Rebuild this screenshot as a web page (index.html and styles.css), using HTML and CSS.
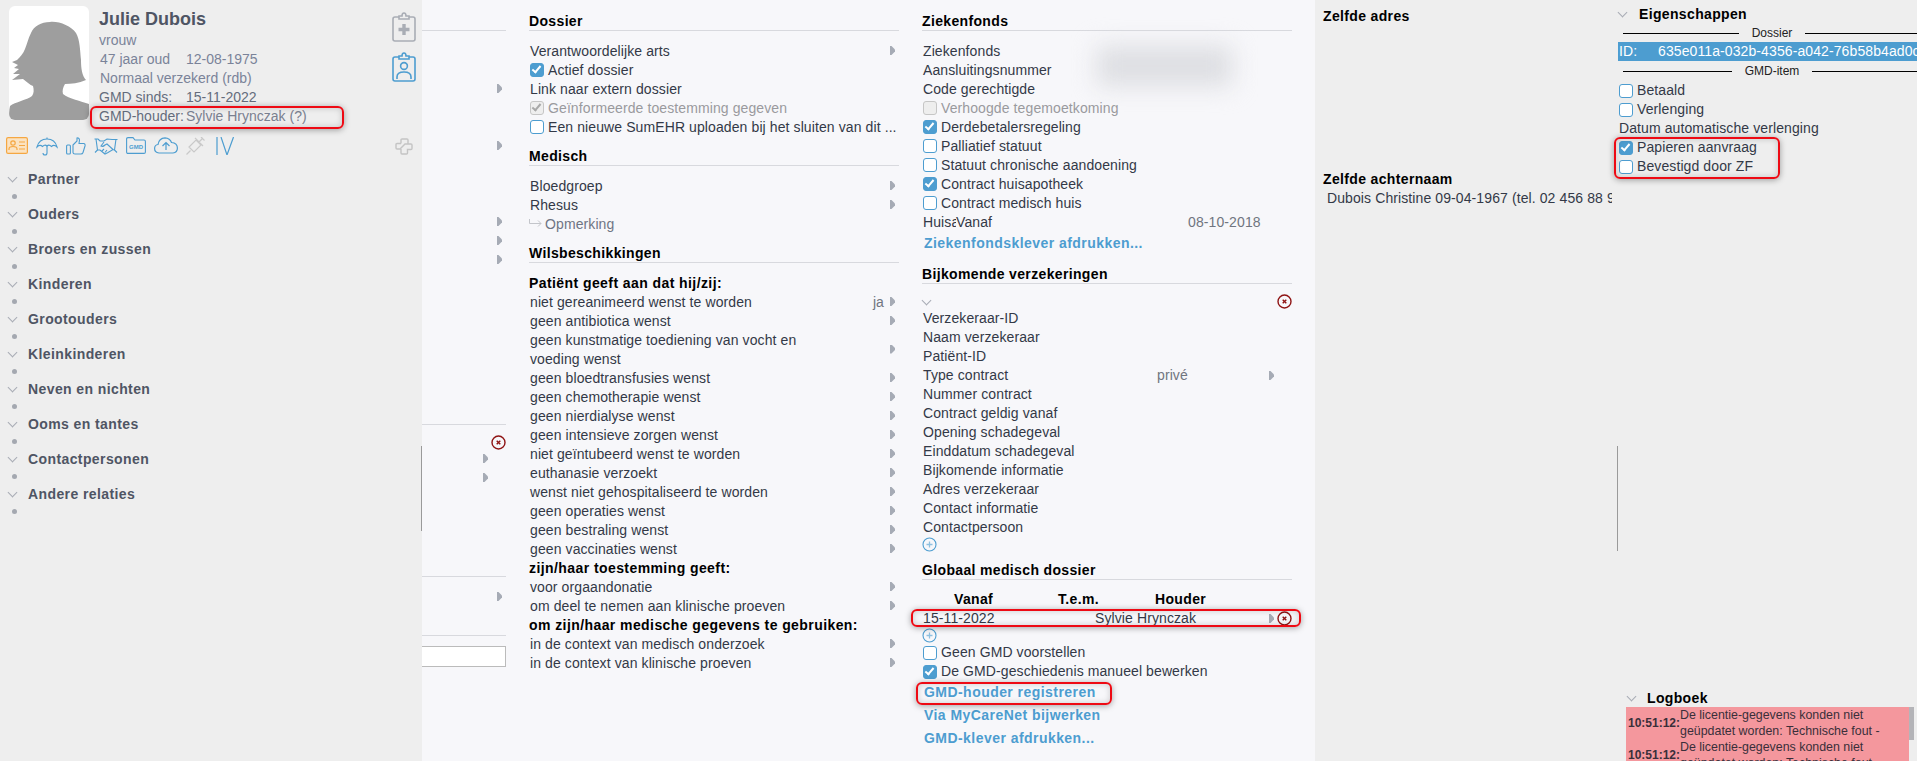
FILE: index.html
```html
<!DOCTYPE html>
<html lang="nl">
  <head>
    <meta charset="UTF-8" />
    <title>Julie Dubois</title>
    <link rel="stylesheet" href="styles.css">
  </head>
  <body>
    <!-- PATIENT -->
    <div id="sidebar">
      <div class="patientHead">
        <div class="photo">
          <svg width="80" height="114" viewBox="0 0 80 114">
            <path fill="#9e9e9e" d="M41 16C32 16 25 20 22 27C19 33 18 38 16 43C14 48 11 51 8 54L3 56L9 59L5 62L10 63L4 68L11 68L3 74L14 73C18 76 21 79 24 80C25 84 25 87 23 90C18 94 6 96 1 100C0 104 0 109 0 114L80 114L80 98C72 95 60 93 54 88C53 85 54 81 56 78C62 78 70 77 77 74C73 70 72 62 72 54C71 44 71 34 67 27C62 20 50 15 41 16Z"/>
          </svg>
        </div>
        <div class="patientInfo">
          <div class="patientName">Julie Dubois</div>
          <div class="infoLine">vrouw</div>
          <div class="infoLine"><span class="infoKey inset">47 jaar oud</span><span>12-08-1975</span></div>
          <div class="infoLine"><span class="inset">Normaal verzekerd (rdb)</span></div>
          <div class="infoLine dark"><span class="infoKey">GMD sinds:</span><span>15-11-2022</span></div>
          <div class="infoLine dark"><span class="infoKey">GMD-houder:</span><span class="soft">Sylvie Hrynczak (?)</span></div>
        </div>
        <div class="clipIcons">
          <svg width="24" height="30" viewBox="0 0 24 30" fill="none" stroke="#a9adb5" stroke-width="1.6">
            <path d="M7 5H3Q1 5 1 7V27Q1 29 3 29H21Q23 29 23 27V7Q23 5 21 5H17"/>
            <path d="M7 7V4H10Q10 1 12 1Q14 1 14 4H17V7Z"/>
            <path d="M12 12V23M6.5 17.5H17.5" stroke-width="3.4"/>
          </svg>
          <svg width="24" height="30" viewBox="0 0 24 30" fill="none" stroke="#4d9dd0" stroke-width="1.6">
            <path d="M7 5H3Q1 5 1 7V27Q1 29 3 29H21Q23 29 23 27V7Q23 5 21 5H17"/>
            <path d="M7 7V4H10Q10 1 12 1Q14 1 14 4H17V7Z"/>
            <circle cx="12" cy="14" r="3.4"/>
            <path d="M5 27V25Q5 20 12 20Q19 20 19 25V27"/>
          </svg>
        </div>
      </div>

      <div class="iconBar">
        <svg width="22" height="17" viewBox="0 0 22 17" fill="none" stroke="#f5a742" stroke-width="1.2">
          <rect x="0.6" y="0.6" width="20.8" height="15.8" rx="1.5" fill="#fbe3c2"/>
          <circle cx="7" cy="6" r="2.2"/>
          <path d="M3 13V12Q3 9.5 7 9.5Q11 9.5 11 12V13M13 5H19M13 8.5H19M13 12H19"/>
        </svg>
        <svg width="22" height="19" viewBox="0 0 22 19" fill="none" stroke="#4d9dd0" stroke-width="1.1">
          <path d="M1 10Q3 2 11 2Q19 2 21 10Q18 7 15.5 9.5Q13 7 11 9Q9 7 6.5 9.5Q4 7 1 10Z"/>
          <path d="M11 0.5V2M11 9V16Q11 18 9 18Q7 18 7 16"/>
        </svg>
        <svg width="20" height="18" viewBox="0 0 20 18" fill="none" stroke="#4d9dd0" stroke-width="1.1">
          <rect x="0.6" y="8" width="3.8" height="9" rx="1"/>
          <path d="M7 8L11 4V1Q13 0.5 13.5 3L13 6.5H18Q19.5 7 19 9L17 15.5Q16.5 17 15 17H9Q7 17 7 15.5Z"/>
        </svg>
        <svg width="24" height="18" viewBox="0 0 24 18" fill="none" stroke="#4d9dd0" stroke-width="1.1">
          <path d="M0.5 2H4L6 4H10L13 2L18 2.5H23.5M2 2L3.5 13L1 15.5M22 2L20.5 13L23 15.5"/>
          <path d="M3.5 13H6L11 17L14 15.5L19 12.5L20.5 13M10 5L7 9Q9 10 11 8L13 7L19 12.5M8 14L10 12M11 15.5L13 13"/>
        </svg>
        <svg width="20" height="17" viewBox="0 0 20 17" fill="none" stroke="#4d9dd0" stroke-width="1.1">
          <path d="M0.6 2Q0.6 0.6 2 0.6H7L9 3H18Q19.4 3 19.4 4.4V15Q19.4 16.4 18 16.4H2Q0.6 16.4 0.6 15Z"/>
          <text x="10" y="12" class="gmdGlyph">GMD</text>
        </svg>
        <svg width="24" height="17" viewBox="0 0 24 17" fill="none" stroke="#4d9dd0" stroke-width="1.2">
          <path d="M6 16H5Q0.6 15.5 0.6 11.5Q0.6 8 4 7.5Q5 1 11 0.8Q16 1 17.5 5.5Q23.4 6 23.4 11Q23.4 15.5 19 16Z"/>
          <path d="M12 13V5.5M8.5 9L12 5.5L15.5 9"/>
        </svg>
        <svg width="19" height="18" viewBox="0 0 19 18" fill="none" stroke="#c9c9c9" stroke-width="1.2">
          <path d="M0.5 17.5L4.5 13.5M3 10L8 15L15 8L10 3L3 10ZM9 1L17 9M13 5L17 1M15 0L18.5 3.5"/>
        </svg>
        <svg class="ivIcon" width="18" height="18" viewBox="0 0 18 18" fill="none" stroke="#4d9dd0" stroke-width="1.2">
          <path d="M1 0V18M5 0L11 18L17.5 0"/>
        </svg>
        <svg class="crossIcon" width="18" height="17" viewBox="0 0 18 17" fill="none" stroke="#c4c4c4" stroke-width="1.4">
          <path d="M6 5.5V2Q6 1 7 1H12Q13 1 13 2V5.5M6 5.5H2Q1 5.5 1 6.5V10Q1 11 2 11H5L10 6H16Q17 6 17 7V10.5Q17 11.5 16 11.5H12.5V15Q12.5 16 11.5 16H7Q6 16 6 15V11"/>
        </svg>
      </div>

      <div class="tree">
        <div class="treeItem"><div class="treeTitle"><span class="chev"></span>Partner</div><div class="treeDot"></div></div>
        <div class="treeItem"><div class="treeTitle"><span class="chev"></span>Ouders</div><div class="treeDot"></div></div>
        <div class="treeItem"><div class="treeTitle"><span class="chev"></span>Broers en zussen</div><div class="treeDot"></div></div>
        <div class="treeItem"><div class="treeTitle"><span class="chev"></span>Kinderen</div><div class="treeDot"></div></div>
        <div class="treeItem"><div class="treeTitle"><span class="chev"></span>Grootouders</div><div class="treeDot"></div></div>
        <div class="treeItem"><div class="treeTitle"><span class="chev"></span>Kleinkinderen</div><div class="treeDot"></div></div>
        <div class="treeItem"><div class="treeTitle"><span class="chev"></span>Neven en nichten</div><div class="treeDot"></div></div>
        <div class="treeItem"><div class="treeTitle"><span class="chev"></span>Ooms en tantes</div><div class="treeDot"></div></div>
        <div class="treeItem"><div class="treeTitle"><span class="chev"></span>Contactpersonen</div><div class="treeDot"></div></div>
        <div class="treeItem"><div class="treeTitle"><span class="chev"></span>Andere relaties</div><div class="treeDot"></div></div>
      </div>
    </div>

    <!-- MIDDEN -->
    <div id="middle">
      <div class="stubCol">
        <div class="stubRule"></div>
        <div class="stubArrow a1"></div>
        <div class="stubArrow a2"></div>
        <div class="stubArrow a3"></div>
        <div class="stubArrow a4"></div>
        <div class="stubArrow a5"></div>
        <div class="stubRule r2"></div>
        <svg class="removeIcon stubRemove" width="15" height="15" viewBox="0 0 15 15"><use href="#removeGlyph"/></svg>
        <div class="stubArrow a6"></div>
        <div class="stubArrow a7"></div>
        <div class="stubRule r3"></div>
        <div class="stubArrow a8"></div>
        <div class="stubRule r4"></div>
        <div class="stubInput"></div>
      </div>

      <div class="formCol nudged">
        <div class="secHead first">Dossier</div>
        <div class="row"><span class="lbl">Verantwoordelijke arts</span><i class="arrow"></i></div>
        <div class="row"><span class="cb on"></span>Actief dossier</div>
        <div class="row"><span class="lbl">Link naar extern dossier</span></div>
        <div class="row muted"><span class="cb dis on"></span>Geïnformeerde toestemming gegeven</div>
        <div class="row"><span class="cb"></span>Een nieuwe SumEHR uploaden bij het sluiten van dit ...</div>

        <div class="secHead">Medisch</div>
        <div class="row"><span class="lbl">Bloedgroep</span><i class="arrow"></i></div>
        <div class="row"><span class="lbl">Rhesus</span><i class="arrow"></i></div>
        <div class="row soft">
          <svg class="replyIcon" width="13" height="9" viewBox="0 0 13 9" fill="none" stroke="#c3c5ca" stroke-width="1"><path d="M0.5 0V4.5H12M9 1.5L12 4.5L9 7.5"/></svg>Opmerking
        </div>

        <div class="secHead">Wilsbeschikkingen</div>
        <div class="row bold">Patiënt geeft aan dat hij/zij:</div>
        <div class="row"><span class="lbl">niet gereanimeerd wenst te worden</span><span class="val">ja</span><i class="arrow"></i></div>
        <div class="row"><span class="lbl">geen antibiotica wenst</span><i class="arrow"></i></div>
        <div class="row double"><span class="lbl">geen kunstmatige toediening van vocht en voeding wenst</span><i class="arrow"></i></div>
        <div class="row"><span class="lbl">geen bloedtransfusies wenst</span><i class="arrow"></i></div>
        <div class="row"><span class="lbl">geen chemotherapie wenst</span><i class="arrow"></i></div>
        <div class="row"><span class="lbl">geen nierdialyse wenst</span><i class="arrow"></i></div>
        <div class="row"><span class="lbl">geen intensieve zorgen wenst</span><i class="arrow"></i></div>
        <div class="row"><span class="lbl">niet geïntubeerd wenst te worden</span><i class="arrow"></i></div>
        <div class="row"><span class="lbl">euthanasie verzoekt</span><i class="arrow"></i></div>
        <div class="row"><span class="lbl">wenst niet gehospitaliseerd te worden</span><i class="arrow"></i></div>
        <div class="row"><span class="lbl">geen operaties wenst</span><i class="arrow"></i></div>
        <div class="row"><span class="lbl">geen bestraling wenst</span><i class="arrow"></i></div>
        <div class="row"><span class="lbl">geen vaccinaties wenst</span><i class="arrow"></i></div>
        <div class="row bold">zijn/haar toestemming geeft:</div>
        <div class="row"><span class="lbl">voor orgaandonatie</span><i class="arrow"></i></div>
        <div class="row"><span class="lbl">om deel te nemen aan klinische proeven</span><i class="arrow"></i></div>
        <div class="row bold">om zijn/haar medische gegevens te gebruiken:</div>
        <div class="row"><span class="lbl">in de context van medisch onderzoek</span><i class="arrow"></i></div>
        <div class="row"><span class="lbl">in de context van klinische proeven</span><i class="arrow"></i></div>
      </div>

      <div class="formCol">
        <div class="blurBlob"></div>
        <div class="secHead first">Ziekenfonds</div>
        <div class="nudged">
          <div class="row"><span class="lbl">Ziekenfonds</span></div>
          <div class="row"><span class="lbl">Aansluitingsnummer</span></div>
          <div class="row"><span class="lbl">Code gerechtigde</span></div>
          <div class="row muted"><span class="cb dis"></span>Verhoogde tegemoetkoming</div>
          <div class="row"><span class="cb on"></span>Derdebetalersregeling</div>
          <div class="row"><span class="cb"></span>Palliatief statuut</div>
          <div class="row"><span class="cb"></span>Statuut chronische aandoening</div>
          <div class="row"><span class="cb on"></span>Contract huisapotheek</div>
          <div class="row"><span class="cb"></span>Contract medisch huis</div>
          <div class="row"><span class="lbl clipLbl">Huisapotheek</span><span class="clipVan">Vanaf</span><span class="val dateVal">08-10-2018</span></div>
          <div class="linkRow">Ziekenfondsklever afdrukken...</div>
        </div>

        <div class="secHead">Bijkomende verzekeringen</div>
        <div class="chevRow"><span class="chev"></span><svg class="removeIcon" width="15" height="15" viewBox="0 0 15 15"><use href="#removeGlyph"/></svg></div>
        <div class="row"><span class="lbl">Verzekeraar-ID</span></div>
        <div class="row"><span class="lbl">Naam verzekeraar</span></div>
        <div class="row"><span class="lbl">Patiënt-ID</span></div>
        <div class="row"><span class="lbl typeLbl">Type contract</span><span class="val">privé</span><i class="arrow typeArrow"></i></div>
        <div class="row"><span class="lbl">Nummer contract</span></div>
        <div class="row"><span class="lbl">Contract geldig vanaf</span></div>
        <div class="row"><span class="lbl">Opening schadegeval</span></div>
        <div class="row"><span class="lbl">Einddatum schadegeval</span></div>
        <div class="row"><span class="lbl">Bijkomende informatie</span></div>
        <div class="row"><span class="lbl">Adres verzekeraar</span></div>
        <div class="row"><span class="lbl">Contact informatie</span></div>
        <div class="row"><span class="lbl">Contactpersoon</span></div>
        <div class="plusRow short"><svg width="15" height="15" viewBox="0 0 15 15"><use href="#plusGlyph"/></svg></div>

        <div class="secHead">Globaal medisch dossier</div>
        <div class="gmdHead"><span class="cVan">Vanaf</span><span class="cTem">T.e.m.</span><span>Houder</span></div>
        <div class="gmdRow"><span class="cDate">15-11-2022</span><span>Sylvie Hrynczak</span><i class="arrow gmdArrow"></i><svg class="removeIcon" width="15" height="15" viewBox="0 0 15 15"><use href="#removeGlyph"/></svg></div>
        <div class="plusRow"><svg width="15" height="15" viewBox="0 0 15 15"><use href="#plusGlyph"/></svg></div>
        <div class="row"><span class="cb"></span>Geen GMD voorstellen</div>
        <div class="row"><span class="cb on"></span>De GMD-geschiedenis manueel bewerken</div>
        <div class="linkRow">GMD-houder registreren</div>
        <div class="linkRow">Via MyCareNet bijwerken</div>
        <div class="linkRow">GMD-klever afdrukken...</div>
      </div>
    </div>

    <!-- RECHTS -->
    <div id="right">
      <div class="relatedCol">
        <div class="relTitle">Zelfde adres</div>
        <div class="relTitle second">Zelfde achternaam</div>
        <div class="relLine">Dubois Christine 09-04-1967 (tel. 02 456 88 99)</div>
      </div>

      <div class="propsCol">
        <div class="propsTitle"><span class="chev"></span>Eigenschappen</div>
        <div class="legend"><span class="legendLine"></span><span class="legendText">Dossier</span><span class="legendLine"></span></div>
        <div class="idBar"><span class="idKey">ID:</span><span>635e011a-032b-4356-a042-76b58b4ad0c1</span></div>
        <div class="legend second"><span class="legendLine"></span><span class="legendText">GMD-item</span><span class="legendLine"></span></div>
        <div class="row"><span class="cb"></span>Betaald</div>
        <div class="row"><span class="cb"></span>Verlenging</div>
        <div class="row"><span class="lbl">Datum automatische verlenging</span></div>
        <div class="row"><span class="cb on"></span>Papieren aanvraag</div>
        <div class="row"><span class="cb"></span>Bevestigd door ZF</div>

        <div class="logBlock">
          <div class="logTitle"><span class="chev"></span>Logboek</div>
          <div class="logBox">
            <div class="logList">
              <div class="logItem"><b>10:51:12:</b><span>De licentie-gegevens konden niet geüpdatet worden: Technische fout -</span></div>
              <div class="logItem"><b>10:51:12:</b><span>De licentie-gegevens konden niet geüpdatet worden: Technische fout -</span></div>
            </div>
            <div class="logScroll"><div class="logThumb"></div></div>
          </div>
        </div>
      </div>
    </div>

    <!-- schuifbalk-randen en rode kaders over de schermafdruk -->
    <div class="edgeLine e1"></div>
    <div class="edgeLine e2"></div>
    <div class="mark m1"></div>
    <div class="mark m2"></div>
    <div class="mark m3"></div>
    <div class="mark m4"></div>

    <svg class="defs" width="0" height="0">
      <defs>
        <g id="removeGlyph" fill="none" stroke="#8f1414">
          <circle cx="7.5" cy="7.5" r="6.5" stroke-width="1.4"/>
          <path d="M5.7 5.7L9.3 9.3M9.3 5.7L5.7 9.3" stroke-width="1.4"/>
        </g>
        <g id="plusGlyph" fill="none" stroke="#4d9dd0">
          <circle cx="7.5" cy="7.5" r="6.5" stroke-width="1.1"/>
          <path d="M7.5 4.5V10.5M4.5 7.5H10.5" stroke-width="1.3" stroke="#8fc0df"/>
        </g>
      </defs>
    </svg>
  </body>
</html>
```

FILE: styles.css
```css
html,
body {
  height: 100%;
}

body {
  margin: 0;
  height: 761px;
  display: flex;
  position: relative;
  overflow: hidden;
  background: #eee;
  color: #333947;
  font-family: "Liberation Sans", Arial, sans-serif;
  font-size: 14px;
  line-height: 19px;
}

.defs {
  position: absolute;
}

/* sidebar */
#sidebar {
  width: 422px;
  flex: none;
  height: 761px;
  background: #eee;
  box-sizing: border-box;
}

.patientHead {
  display: flex;
  height: 126px;
  padding: 6px 0 0 9px;
  box-sizing: border-box;
}

.photo {
  width: 80px;
  height: 114px;
  background: #fff;
  border-radius: 6px;
  overflow: hidden;
  flex: none;
}

.photo svg {
  display: block;
}

.patientInfo {
  margin-left: 10px;
  padding-top: 2px;
  width: 293px;
  color: #7a8399;
}

.patientName {
  font-size: 18px;
  font-weight: bold;
  line-height: 23px;
  color: #4f5564;
}

.infoLine {
  height: 19px;
  white-space: nowrap;
}

.infoLine.dark {
  color: #646c7c;
}

.soft {
  color: #7a8090;
}

.infoKey {
  display: inline-block;
  width: 87px;
}

.inset {
  margin-left: 1px;
}

.infoKey.inset {
  width: 86px;
}

.clipIcons {
  display: flex;
  flex-direction: column;
  gap: 10px;
  padding-top: 6px;
}

.iconBar {
  display: flex;
  align-items: flex-start;
  gap: 8px;
  height: 19px;
  margin-top: 11px;
  padding: 0 9px 0 6px;
}

.ivIcon {
  margin-left: 3px;
}

.crossIcon {
  margin-left: auto;
  margin-top: 1px;
}

.gmdGlyph {
  font-family: "Liberation Sans", Arial, sans-serif;
  font-size: 6px;
  font-weight: bold;
  fill: #4d9dd0;
  stroke: none;
  text-anchor: middle;
}

.tree {
  margin-top: 14px;
}

.treeItem {
  height: 35px;
}

.treeTitle {
  display: flex;
  align-items: center;
  height: 19px;
  padding-left: 8px;
  font-weight: bold;
  letter-spacing: 0.4px;
  color: #4f5564;
}

.treeTitle .chev {
  margin-right: 11px;
}

.treeDot {
  width: 5px;
  height: 5px;
  margin: 5px 0 0 12px;
  border-radius: 50%;
  background: #a4a8b0;
}

.chev {
  display: inline-block;
  flex: none;
  width: 9px;
  height: 5px;
  position: relative;
}

.chev::before {
  content: "";
  position: absolute;
  left: 1px;
  top: -3px;
  width: 6px;
  height: 6px;
  border-right: 1px solid #a8acb5;
  border-bottom: 1px solid #a8acb5;
  transform: rotate(45deg);
}

/* midden */
#middle {
  width: 893px;
  flex: none;
  height: 761px;
  display: flex;
  gap: 23px;
  background: #f7f7fa;
}

.stubCol {
  width: 84px;
  flex: none;
  display: flex;
  flex-direction: column;
  align-items: flex-end;
}

.stubRule {
  width: 100%;
  height: 1px;
  margin-top: 30px;
  background: #d8d9de;
}

.stubRule.r2 {
  margin-top: 160px;
}

.stubRule.r3 {
  margin-top: 94px;
}

.stubRule.r4 {
  margin-top: 34px;
}

.stubArrow {
  width: 5px;
  height: 9px;
  margin-right: 4px;
  background: #a6abb5;
  clip-path: polygon(0 0, 30% 0, 100% 40%, 100% 60%, 30% 100%, 0 100%);
}

.stubArrow.a1 {
  margin-top: 53px;
}

.stubArrow.a2 {
  margin-top: 48px;
}

.stubArrow.a3 {
  margin-top: 67px;
}

.stubArrow.a4,
.stubArrow.a5,
.stubArrow.a7 {
  margin-top: 10px;
}

.stubRemove {
  margin-top: 10px;
}

.stubArrow.a6 {
  margin-top: 4px;
  margin-right: 18px;
}

.stubArrow.a7 {
  margin-right: 18px;
}

.stubArrow.a8 {
  margin-top: 15px;
}

.stubInput {
  width: 100%;
  height: 21px;
  margin-top: 10px;
  background: #fff;
  border: 1px solid #bbb;
  border-left: 0;
  box-sizing: border-box;
}

.formCol {
  width: 370px;
  flex: none;
  position: relative;
}

.secHead {
  height: 19px;
  margin: 11px 0 10px;
  box-sizing: border-box;
  font-weight: bold;
  letter-spacing: 0.35px;
  line-height: 19px;
  color: #000;
  border-bottom: 1px solid #d8d9de;
}

.secHead.first {
  margin-top: 12px;
}

.row {
  display: flex;
  align-items: center;
  height: 19px;
  padding-left: 1px;
  white-space: nowrap;
  letter-spacing: 0.1px;
}

.row.double {
  height: 38px;
  white-space: normal;
}

.row.double .lbl {
  width: 280px;
  flex: none;
}

.row.bold {
  padding-left: 0;
  font-weight: bold;
  letter-spacing: 0.42px;
  color: #000;
}

.row.muted {
  color: #9a9a9e;
}

.row.soft {
  color: #6f7584;
  padding-left: 0;
}

/* tekst een pixel lager, vakjes en pijlen blijven staan */
.nudged .row {
  box-sizing: border-box;
  padding-top: 2px;
}

.nudged .cb,
.nudged .arrow,
.nudged .replyIcon {
  margin-top: -2px;
}

.nudged .linkRow {
  line-height: 25px;
}

.replyIcon {
  margin-right: 3px;
}

.lbl {
  color: #333947;
}

.val {
  margin-left: auto;
  margin-right: 6px;
  color: #70757f;
}

.arrow {
  flex: none;
  width: 5px;
  height: 9px;
  margin-left: auto;
  margin-right: 4px;
  background: #a6abb5;
  clip-path: polygon(0 0, 30% 0, 100% 40%, 100% 60%, 30% 100%, 0 100%);
}

.val + .arrow {
  margin-left: 0;
}

.cb {
  flex: none;
  position: relative;
  width: 14px;
  height: 14px;
  margin-right: 4px;
  box-sizing: border-box;
  border: 1.5px solid #4d9dd0;
  border-radius: 3px;
  background: #fff;
}

.cb.on {
  background: #4d9dd0;
}

.cb.on::after {
  content: "";
  position: absolute;
  left: 3px;
  top: 0;
  width: 3px;
  height: 7px;
  border-right: 2px solid #fff;
  border-bottom: 2px solid #fff;
  transform: rotate(40deg);
}

.cb.dis {
  background: #eeeeee;
  border-color: #c6c6c6;
}

.cb.dis.on::after {
  border-color: #a8a8a8;
}

.blurBlob {
  position: absolute;
  left: 175px;
  top: 46px;
  width: 135px;
  height: 40px;
  background: #dddee2;
  filter: blur(12px);
}

.clipLbl {
  width: 33px;
  overflow: hidden;
  flex: none;
}

.dateVal {
  margin-left: 196px;
}

.linkRow {
  height: 23px;
  line-height: 23px;
  padding-left: 2px;
  font-weight: bold;
  letter-spacing: 0.45px;
  color: #4d9dd0;
}

.chevRow {
  display: flex;
  justify-content: space-between;
  height: 15px;
}

.chevRow .chev {
  margin-top: 6px;
}

.typeLbl {
  width: 234px;
  flex: none;
}

.row .typeLbl + .val {
  margin-left: 0;
}

.row .typeArrow {
  margin-left: auto;
  margin-right: 18px;
}

.removeIcon {
  flex: none;
  display: block;
}

.plusRow {
  height: 15px;
}

.plusRow.short {
  height: 13px;
}

.plusRow svg {
  display: block;
}

.gmdHead {
  display: flex;
  height: 19px;
  font-weight: bold;
  letter-spacing: 0.35px;
  color: #000;
}

.cVan {
  margin-left: 32px;
  width: 104px;
}

.cTem {
  width: 97px;
}

.gmdRow {
  display: flex;
  align-items: center;
  height: 19px;
  padding-left: 1px;
  letter-spacing: 0.1px;
}

.cDate {
  width: 172px;
}

.gmdArrow {
  margin-right: 3px;
}

/* rechts */
#right {
  flex: 1;
  display: flex;
  height: 761px;
  overflow: hidden;
  color: #333947;
}

.relatedCol {
  width: 303px;
  flex: none;
  box-sizing: border-box;
  padding: 7px 6px 0 8px;
  white-space: nowrap;
}

.relTitle {
  font-weight: bold;
  letter-spacing: 0.35px;
  color: #000;
}

.relTitle.second {
  margin-top: 144px;
}

.relLine {
  padding-left: 4px;
  overflow: hidden;
  letter-spacing: 0.1px;
}

.propsCol {
  flex: 1;
  min-width: 0;
  display: flex;
  flex-direction: column;
  position: relative;
}

.propsTitle {
  display: flex;
  align-items: center;
  height: 19px;
  margin-top: 5px;
  font-weight: bold;
  letter-spacing: 0.35px;
  color: #000;
}

.propsTitle .chev {
  margin-right: 12px;
}

.legend {
  display: flex;
  align-items: center;
  gap: 13px;
  height: 18px;
  margin-left: 5px;
  margin-right: -4px;
  font-size: 12px;
  color: #222;
}

.legend.second {
  height: 20px;
}

.legendLine {
  flex: 1;
  height: 1px;
  background: #000;
}

.idBar {
  display: flex;
  height: 19px;
  background: #4d9dd0;
  color: #fff;
  white-space: nowrap;
  padding-left: 1px;
  overflow: hidden;
  letter-spacing: 0.1px;
}

.idKey {
  width: 39px;
  flex: none;
}

.logBlock {
  margin-top: auto;
  margin-left: 8px;
  margin-right: 3px;
  height: 72px;
}

.logTitle {
  display: flex;
  align-items: center;
  height: 18px;
  font-weight: bold;
  letter-spacing: 0.35px;
  color: #000;
}

.logTitle .chev {
  margin: 0 11px 0 1px;
}

.logBox {
  display: flex;
  height: 54px;
  overflow: hidden;
  background: #f4979d;
  font-size: 12.4px;
  line-height: 16px;
  color: #3a2f3a;
}

.logList {
  flex: 1;
  min-width: 0;
}

.logItem {
  display: flex;
  align-items: center;
  padding-left: 2px;
}

.logItem b {
  font-size: 12px;
  flex: none;
}

.logScroll {
  width: 5px;
  flex: none;
  background: #eee;
}

.logThumb {
  height: 33px;
  background: #b4b4b8;
}

/* schuifbalk-randen */
.edgeLine {
  position: absolute;
  top: 446px;
  width: 1px;
  background: #9a9a9a;
}

.e1 {
  left: 421px;
  height: 85px;
}

.e2 {
  left: 1617px;
  height: 105px;
}

/* rode kaders */
.mark {
  position: absolute;
  box-sizing: border-box;
  border: 2px solid #ee0a14;
  border-radius: 6px;
  box-shadow: 0 1px 6px rgba(0, 0, 0, 0.35), inset 0 0 6px rgba(0, 0, 0, 0.18);
}

.m1 {
  left: 90px;
  top: 106px;
  width: 254px;
  height: 23px;
}

.m2 {
  left: 911px;
  top: 609px;
  width: 390px;
  height: 18px;
}

.m3 {
  left: 916px;
  top: 682px;
  width: 196px;
  height: 23px;
}

.m4 {
  left: 1614px;
  top: 137px;
  width: 166px;
  height: 42px;
}
```
